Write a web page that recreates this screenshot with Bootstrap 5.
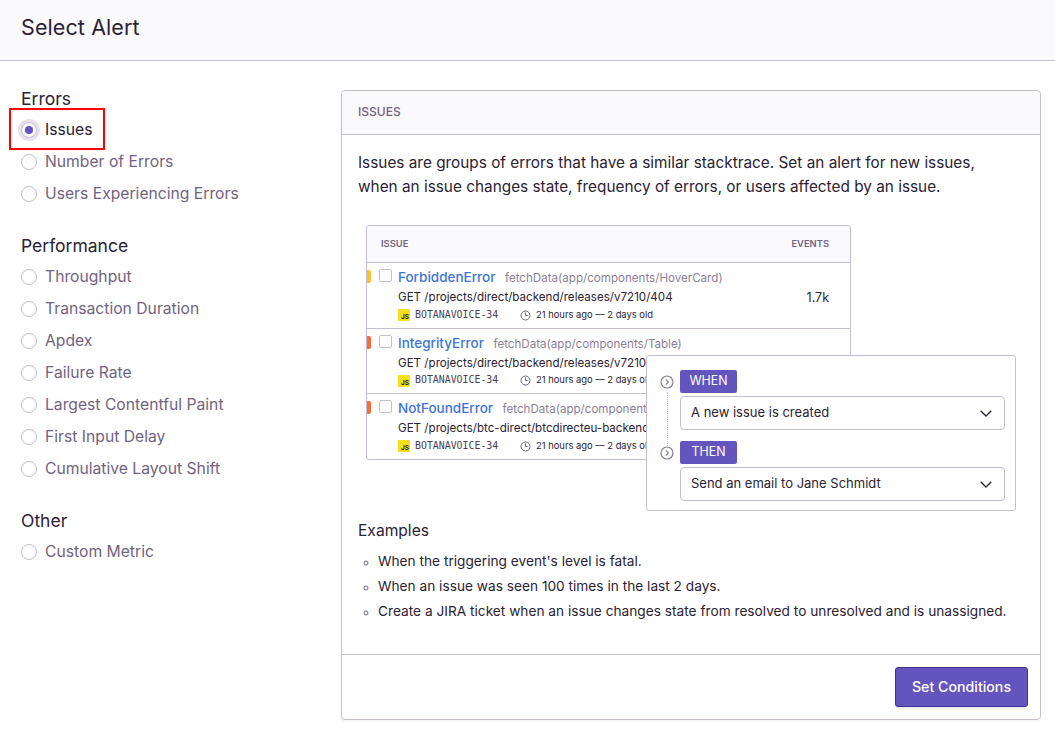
<!DOCTYPE html>
<html lang="en">
<head>
  <meta charset="UTF-8">
  <meta name="viewport" content="width=device-width, initial-scale=1">
  <title>Select Alert</title>
  <link href="https://cdn.jsdelivr.net/npm/bootstrap@5.3.3/dist/css/bootstrap.min.css" rel="stylesheet">
  <style>
    body { font-family: Inter, "Noto Sans", sans-serif; color: #2b2233; background: #fff; height: 731px; overflow: hidden; }
    .top-bar { height: 61px; background: #faf9fb; border-bottom: 1px solid #c6becf; padding: 0 21px 5px; }
    .top-bar h1 { font-size: 21.5px; font-weight: 400; margin: 0; letter-spacing: .1px; }
    .side-col { width: 341px; padding: 27px 0 0 21px; }
    .side-title { font-size: 17.5px; line-height: 22px; margin: 0 0 4px; font-weight: 400; }
    .side-group { margin-bottom: 25px; }
    .alert-opt { height: 32px; display: flex; align-items: center; gap: 8px; color: #71637e; font-size: 15.7px; position: relative; }
    .alert-opt.on { color: #2b2233; }
    .radio-dot { width: 16px; height: 16px; border: 1px solid #c6becf; border-radius: 50%; background: #fff; flex: none; display: flex; align-items: center; justify-content: center; }
    .on .radio-dot { box-shadow: 0 0 0 3px #e7e1ec; }
    .on .radio-dot::after { content: ""; width: 8px; height: 8px; border-radius: 50%; background: #6454bd; }
    .red-box { position: absolute; left: -12px; top: -6px; width: 96px; height: 42px; border: 2px solid #f00; }
    .main-panel { width: 700px; height: 630px; margin-top: 29px; border: 1px solid #c6becf; border-radius: 4px; box-shadow: 0 2px 0 rgba(37,11,54,.04); }
    .panel-head { height: 44px; background: #faf9fb; border-bottom: 1px solid #c6becf; padding: 0 16px 2px; font-size: 12px; font-weight: 500; color: #71637e; border-radius: 4px 4px 0 0; }
    .panel-main { height: 519px; padding: 16px; }
    .intro { font-size: 15.35px; line-height: 24px; margin: 0; width: 650px; }
    .demo { position: relative; height: 296px; margin-top: 26px; }
    .mini-table { position: absolute; left: 8px; top: 0; width: 485px; height: 235px; border: 1px solid #c6becf; border-radius: 3px; overflow: hidden; background: #fff; }
    .mini-head { height: 37px; background: #faf9fb; border-bottom: 1px solid #c6becf; padding: 1px 21px 0 14px; font-size: 9.4px; font-weight: 600; color: #71637e; }
    .mini-row { height: 65.5px; border-bottom: 1px solid #c6becf; position: relative; padding: 6px 0 0 31px; }
    .mini-row:last-child { border-bottom: 0; }
    .lvl { position: absolute; left: 0; top: 7px; width: 4px; height: 13px; border-radius: 0 2px 2px 0; }
    .chk { position: absolute; left: 12px; top: 6px; width: 13px; height: 13px; border: 1px solid #c6becf; border-radius: 2px; }
    .err-line { font-size: 12.5px; line-height: 16px; white-space: nowrap; }
    .err-name { color: #3d74db; font-weight: 500; font-size: 13.5px; margin-right: 6px; }
    .err-fn { color: #8b7f96; font-size: 11.6px; }
    .get-line { font-size: 11.6px; line-height: 16px; margin-top: 3px; white-space: nowrap; }
    .meta-line { display: flex; align-items: center; font-size: 9.4px; height: 14px; margin-top: 3px; white-space: nowrap; }
    .js-tag { width: 12px; height: 12px; background: #f7df1e; font-size: 6.5px; font-weight: 700; display: flex; align-items: flex-end; justify-content: flex-end; padding-right: 1px; line-height: 7px; }
    .proj { font-family: "DejaVu Sans Mono", monospace; font-size: 9.9px; color: #4a3e56; margin-left: 5px; width: 105px; }
    .ago { margin-left: 0; display: inline-flex; gap: 5px; align-items: center; }
    .evt-count { position: absolute; right: 21px; top: 26px; font-size: 12.5px; }
    .rule-card { position: absolute; left: 288px; top: 130px; width: 370px; height: 156px; background: #fff; border: 1px solid #c6becf; border-radius: 3px; padding: 14px 10px 0 13px; }
    .rule-step { display: flex; gap: 6px; position: relative; }
    .rule-step + .rule-step { margin-top: 11px; }
    .rule-ico { flex: none; margin-top: 5px; width: 14px; height: 14px; background: #fff; position: relative; z-index: 1; }
    .rule-line { position: absolute; left: 20px; top: 36px; height: 60px; border-left: 1px dotted #c6becf; }
    .rule-body { flex: 1; }
    .rule-tag { width: 57px; height: 23px; background: #6454bd; color: #fff; font-size: 12.4px; border-radius: 2px; margin-bottom: 3px; }
    .rule-select { height: 34px; border: 1px solid #c6becf; border-radius: 4px; padding: 0 12px 0 10px; font-size: 13px; }
    .ex-title { font-size: 15.6px; font-weight: 400; line-height: 20px; margin: 0 0 8px; }
    .ex-list { list-style: circle; padding-left: 20px; margin: 0; font-size: 13.7px; line-height: 25px; }
    .ex-list li::marker { color: #71637e; font-size: 11px; }
    .panel-foot { height: 64px; border-top: 1px solid #c6becf; padding: 0 12px; }
    .go-btn { width: 133px; height: 40px; background: #6454bd; border: 1px solid #3d328e; color: #fff; font-size: 14.2px; font-weight: 500; border-radius: 3px; padding: 0; box-shadow: 0 2px 0 rgba(37,11,54,.08); }
    .go-btn:hover { background: #6454bd; color: #fff; }
  </style>
</head>
<body>
  <div class="top-bar d-flex align-items-center">
    <h1>Select Alert</h1>
  </div>

  <div class="d-flex">
    <div class="side-col">
      <div class="side-group">
        <h2 class="side-title">Errors</h2>
        <div class="alert-opt on"><span class="radio-dot"></span>Issues<span class="red-box"></span></div>
        <div class="alert-opt"><span class="radio-dot"></span>Number of Errors</div>
        <div class="alert-opt"><span class="radio-dot"></span>Users Experiencing Errors</div>
      </div>
      <div class="side-group">
        <h2 class="side-title">Performance</h2>
        <div class="alert-opt"><span class="radio-dot"></span>Throughput</div>
        <div class="alert-opt"><span class="radio-dot"></span>Transaction Duration</div>
        <div class="alert-opt"><span class="radio-dot"></span>Apdex</div>
        <div class="alert-opt"><span class="radio-dot"></span>Failure Rate</div>
        <div class="alert-opt"><span class="radio-dot"></span>Largest Contentful Paint</div>
        <div class="alert-opt"><span class="radio-dot"></span>First Input Delay</div>
        <div class="alert-opt"><span class="radio-dot"></span>Cumulative Layout Shift</div>
      </div>
      <div class="side-group">
        <h2 class="side-title">Other</h2>
        <div class="alert-opt"><span class="radio-dot"></span>Custom Metric</div>
      </div>
    </div>

    <div class="main-panel">
      <div class="panel-head d-flex align-items-center">ISSUES</div>
      <div class="panel-main">
        <p class="intro">Issues are groups of errors that have a similar stacktrace. Set an alert for new issues, when an issue changes state, frequency of errors, or users affected by an issue.</p>

        <div class="demo">
          <div class="mini-table">
            <div class="mini-head d-flex align-items-center justify-content-between"><span>ISSUE</span><span>EVENTS</span></div>

            <div class="mini-row">
              <span class="lvl" style="background:#f9c133"></span><span class="chk"></span>
              <div class="err-line"><span class="err-name">ForbiddenError</span> <span class="err-fn">fetchData(app/components/HoverCard)</span></div>
              <div class="get-line">GET /projects/direct/backend/releases/v7210/404</div>
              <div class="meta-line"><span class="js-tag">JS</span><span class="proj">BOTANAVOICE-34</span>
                <span class="ago"><svg width="11" height="11" viewBox="0 0 11 11" fill="none" stroke="#71637e"><circle cx="5.5" cy="5.5" r="4.5"/><path d="M5.5 2.5v3h2.2"/></svg>21 hours ago — 2 days old</span></div>
              <span class="evt-count">1.7k</span>
            </div>

            <div class="mini-row">
              <span class="lvl" style="background:#fa6b3c"></span><span class="chk"></span>
              <div class="err-line"><span class="err-name">IntegrityError</span> <span class="err-fn">fetchData(app/components/Table)</span></div>
              <div class="get-line">GET /projects/direct/backend/releases/v7210/404</div>
              <div class="meta-line"><span class="js-tag">JS</span><span class="proj">BOTANAVOICE-34</span>
                <span class="ago"><svg width="11" height="11" viewBox="0 0 11 11" fill="none" stroke="#71637e"><circle cx="5.5" cy="5.5" r="4.5"/><path d="M5.5 2.5v3h2.2"/></svg>21 hours ago — 2 days old</span></div>
            </div>

            <div class="mini-row">
              <span class="lvl" style="background:#fa6b3c"></span><span class="chk"></span>
              <div class="err-line"><span class="err-name">NotFoundError</span> <span class="err-fn">fetchData(app/components/Table)</span></div>
              <div class="get-line">GET /projects/btc-direct/btcdirecteu-backend/releases</div>
              <div class="meta-line"><span class="js-tag">JS</span><span class="proj">BOTANAVOICE-34</span>
                <span class="ago"><svg width="11" height="11" viewBox="0 0 11 11" fill="none" stroke="#71637e"><circle cx="5.5" cy="5.5" r="4.5"/><path d="M5.5 2.5v3h2.2"/></svg>21 hours ago — 2 days old</span></div>
            </div>
          </div>

          <div class="rule-card">
            <span class="rule-line"></span>
            <div class="rule-step">
              <svg class="rule-ico" viewBox="0 0 14 14" fill="none" stroke="#8b7f96" stroke-width="1.2"><circle cx="7" cy="7" r="6"/><path d="M5.8 4.4 8.4 7 5.8 9.6"/></svg>
              <div class="rule-body">
                <div class="rule-tag d-flex align-items-center justify-content-center">WHEN</div>
                <div class="rule-select d-flex align-items-center justify-content-between">A new issue is created
                  <svg width="12" height="7" viewBox="0 0 12 7" fill="none" stroke="#2b2233" stroke-width="1.3"><path d="M.7.7 6 6l5.3-5.3"/></svg></div>
              </div>
            </div>
            <div class="rule-step">
              <svg class="rule-ico" viewBox="0 0 14 14" fill="none" stroke="#8b7f96" stroke-width="1.2"><circle cx="7" cy="7" r="6"/><path d="M5.8 4.4 8.4 7 5.8 9.6"/></svg>
              <div class="rule-body">
                <div class="rule-tag d-flex align-items-center justify-content-center">THEN</div>
                <div class="rule-select d-flex align-items-center justify-content-between">Send an email to Jane Schmidt
                  <svg width="12" height="7" viewBox="0 0 12 7" fill="none" stroke="#2b2233" stroke-width="1.3"><path d="M.7.7 6 6l5.3-5.3"/></svg></div>
              </div>
            </div>
          </div>
        </div>

        <h3 class="ex-title">Examples</h3>
        <ul class="ex-list">
          <li>When the triggering event's level is fatal.</li>
          <li>When an issue was seen 100 times in the last 2 days.</li>
          <li>Create a JIRA ticket when an issue changes state from resolved to unresolved and is unassigned.</li>
        </ul>
      </div>
      <div class="panel-foot d-flex align-items-center justify-content-end">
        <button type="button" class="btn go-btn">Set Conditions</button>
      </div>
    </div>
  </div>

<script src="https://cdn.jsdelivr.net/npm/bootstrap@5.3.3/dist/js/bootstrap.bundle.min.js"></script>
</body>
</html>
